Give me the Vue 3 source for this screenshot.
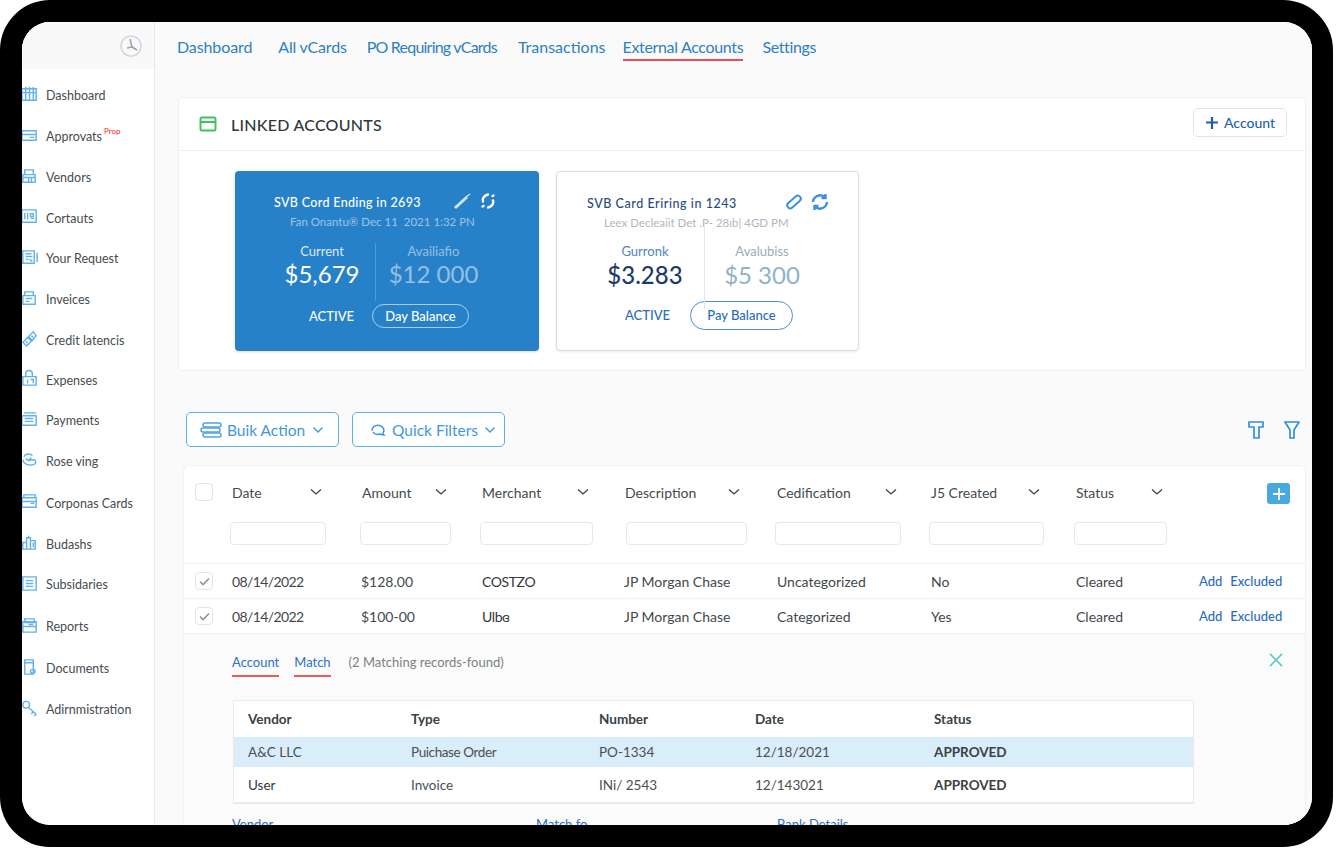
<script setup>
const side = [
  { n: 'Dashboard', h: 41, p: 'M2 4h15v12H2zM2 8h15M6 2v14M10 2v14M14 2v14' },
  { n: 'Approvats', h: 41, tag: 'Prop', p: 'M2 5h15v10H2zM2 9h15M10 12h5' },
  { n: 'Vendors', h: 41, p: 'M5 3h9v5H5zM3 8h13v8H3zM3 11h13M9 11v5M12 11v5' },
  { n: 'Cortauts', h: 40, p: 'M2 3h15v13H2zM5 6v7M8 6v7M11 7h3v3h-3zM11 12h4' },
  { n: 'Your Request', h: 41, p: 'M3 3h12v13H3zM6 6h6M6 9h7M6 12h3M10 12l3 2M18 5v10' },
  { n: 'Inveices', h: 41, p: 'M5 3h9v4H5zM3 7h13v9H3zM6 10h7M6 13h4' },
  { n: 'Credit latencis', h: 40, p: 'M3 14l4 4 5-5-4-4zM9 8l4 4 4-5-3-4zM6 13l2 2M12 7l2 2' },
  { n: 'Expenses', h: 40, p: 'M6 8V5a3.5 3.5 0 017 0v3M3 8h14v9H3zM8 11v4M11 11h3v4' },
  { n: 'Payments', h: 41, p: 'M4 3h13M2 6h15v10H2zM5 9h9M5 12h9' },
  { n: 'Rose ving', h: 41, p: 'M4 6a5 4 0 019-1M3 9c0 5 7 7 12 5 2-1 2-4 0-5l-6 1M6 8l3 2 3-3' },
  { n: 'Corponas Cards', h: 42, p: 'M4 3h12v3H4zM2 6h15v10H2zM2 10h15M11 12h4' },
  { n: 'Budashs', h: 40, p: 'M3 10h4v7H3zM7 5h4v12H7zM11 8h5v9h-5zM9 3v2M14 10v5' },
  { n: 'Subsidaries', h: 41, p: 'M3 3h14v14H3zM6 7h8M6 10h8M6 13h8' },
  { n: 'Reports', h: 43, p: 'M5 3h10v4H5zM3 6h14v5H3zM3 11h14v6H3zM9 9h5' },
  { n: 'Documents', h: 41, p: 'M5 2h9v15H5zM5 5h9M11 14a2.5 2 0 105 0 2.5 2 0 10-5 0' },
  { n: 'Adirnmistration', h: 41, p: 'M3 6a3.5 3.5 0 107 0 3.5 3.5 0 10-7 0M9 9l8 7M14 13l-2 3M17 16l-2 2' },
]
const tabs = [
  { n: 'Dashboard', m: 26, ls: -0.1 }, { n: 'All vCards', m: 20, ls: -0.2 }, { n: 'PO Requiring vCards', m: 21, ls: -0.78 },
  { n: 'Transactions', m: 17, ls: 0 }, { n: 'External Accounts', m: 19, ls: -0.33, on: true }, { n: 'Settings', m: 0, ls: -0.35 },
]
const cols = [
  { n: 'Date', w: 96, ml: 0 }, { n: 'Amount', w: 91, ml: 0 }, { n: 'Merchant', w: 113, ml: 0 }, { n: 'Description', w: 121, ml: 3 },
  { n: 'Cedification', w: 126, ml: 0 }, { n: 'J5 Created', w: 115, ml: 0 }, { n: 'Status', w: 93, ml: 0 },
]
const rows = [
  ['08/14/2022', '$128.00', 'COSTZO', 'JP Morgan Chase', 'Uncategorized', 'No', 'Cleared'],
  ['08/14/2022', '$100-00', 'Ulbɞ', 'JP Morgan Chase', 'Categorized', 'Yes', 'Cleared'],
]
</script>

<template>
  <div class="frame">
    <div class="window">
      <aside class="sidebar">
        <div class="brand">
          <svg width="24" height="24" viewBox="0 0 24 24" fill="none" stroke="#d3d8dc" stroke-width="1.6">
            <circle cx="12" cy="12" r="10" />
            <path d="M11 5l2 8-5 1M13 13l5 3" stroke="#9aa3aa" />
          </svg>
        </div>
        <nav class="side-nav">
          <a v-for="s in side" :key="s.n" class="side-item" :style="{ height: s.h + 'px' }">
            <svg class="side-icon" width="19" height="19" viewBox="0 0 20 20" fill="none" stroke="#62b1ef" stroke-width="1.5">
              <path :d="s.p" />
            </svg>
            <span>{{ s.n }}</span>
            <sup v-if="s.tag" class="tag">{{ s.tag }}</sup>
          </a>
        </nav>
      </aside>

      <main class="main">
        <nav class="tabs">
          <a v-for="t in tabs" :key="t.n" class="tab" :class="{ on: t.on }" :style="{ marginRight: t.m + 'px', letterSpacing: t.ls + 'px' }">{{ t.n }}</a>
        </nav>

        <section class="linked">
          <header class="linked-head">
            <svg width="18" height="16" viewBox="0 0 18 16" fill="none" stroke="#3dc45a" stroke-width="2">
              <rect x="1.5" y="1.5" width="15" height="13" rx="1.5" />
              <path d="M1.5 6h15" />
            </svg>
            <h2>LINKED ACCOUNTS</h2>
            <button class="add-account">
              <svg width="14" height="14" viewBox="0 0 14 14" fill="none" stroke="#1f5eae" stroke-width="2.2"><path d="M7 1v12M1 6.5h12" /></svg>
              Account
            </button>
          </header>
          <div class="cards">
            <article class="card blue">
              <div class="card-title">
                <span>SVB Cord Ending in 2693</span>
                <span class="card-icons">
                  <svg width="20" height="18" viewBox="0 0 20 18" fill="none" stroke="#cfe4f5" stroke-width="3"><path d="M3 16L15 5" /><path d="M14 5l4-3" stroke-width="1.5" /></svg>
                  <svg width="18" height="18" viewBox="0 0 18 18" fill="none" stroke="#fff" stroke-width="2.4" stroke-linecap="round"><path d="M4 9.5c-1-3 1-6 5-7M14.5 3.5l-1 .5M14 8.5c1 3-1 6-5 7M3.5 14.5l1-.5" /></svg>
                </span>
              </div>
              <p class="card-sub">Fan Onantu® Dec 11&nbsp; 2021 1:32 PN</p>
              <div class="stats">
                <div class="stat"><label>Current</label><b>$5,679</b></div>
                <div class="stat second"><label>Availiafio</label><b>$12 000</b></div>
              </div>
              <div class="card-foot">
                <span class="active">ACTIVE</span>
                <button class="pay">Day Balance</button>
              </div>
            </article>
            <article class="card plain">
              <div class="card-title">
                <span>SVB Card Eriring in 1243</span>
                <span class="card-icons">
                  <svg width="20" height="18" viewBox="0 0 20 18" fill="none" stroke="#3d8fdf" stroke-width="2"><rect x="2" y="6" width="16" height="6" rx="3" transform="rotate(-42 10 9)" /></svg>
                  <svg width="20" height="18" viewBox="0 0 20 18" fill="none" stroke="#3d8fdf" stroke-width="2.4"><path d="M3 9a7 7 0 0112-4.5M15.5 1v4h-4M17 9a7 7 0 01-12 4.500M4.500 17v-4h4" /></svg>
                </span>
              </div>
              <p class="card-sub">Leex Decleaiit Det .P- 28ıb| 4GD PM</p>
              <div class="stats">
                <div class="stat"><label>Gurronk</label><b>$3.283</b></div>
                <div class="stat second"><label>Avalubiss</label><b>$5 300</b></div>
              </div>
              <div class="card-foot">
                <span class="active">ACTIVE</span>
                <button class="pay">Pay Balance</button>
              </div>
            </article>
          </div>
        </section>

        <div class="toolbar">
          <button class="tool">
            <svg width="22" height="18" viewBox="0 0 22 18" fill="none" stroke="#4fa3e8" stroke-width="1.5"><rect x="3" y="2" width="18" height="4" rx="2" /><rect x="1" y="7" width="19" height="4" rx="2" /><rect x="3" y="12" width="18" height="4" rx="2" /></svg>
            Buik Action
            <svg class="chev" width="12" height="8" viewBox="0 0 12 8" fill="none" stroke="#3f97e2" stroke-width="1.4"><path d="M1.500 1.500L6 6l4.500-4.500" /></svg>
          </button>
          <button class="tool second-tool">
            <svg width="16" height="14" viewBox="0 0 16 14" fill="none" stroke="#3f97e2" stroke-width="1.5"><path d="M2 8a6 5 0 1111 2c0 1 1 2 1 2-2 0-3-.5-4-1-3 1-6 0-7-2" /></svg>
            Quick Filters
            <svg width="12" height="8" viewBox="0 0 12 8" fill="none" stroke="#3f97e2" stroke-width="1.4"><path d="M1.500 1.500L6 6l4.500-4.500" /></svg>
          </button>
          <div class="tool-icons">
            <svg width="16" height="18" viewBox="0 0 16 18" fill="none" stroke="#2f8fe0" stroke-width="1.7"><path d="M1 1h14v5h-4v11H6V6H1z" stroke-linejoin="round" /></svg>
            <svg width="16" height="18" viewBox="0 0 16 18" fill="none" stroke="#2f8fe0" stroke-width="1.7"><path d="M1 1h14L10 9v8H6V9z" stroke-linejoin="round" /></svg>
          </div>
        </div>

        <section class="table-card">
          <div class="grid head">
            <span class="check-cell"><i class="check"></i></span>
            <div v-for="c in cols" :key="c.n" class="th">
              <div class="th-label" :style="{ width: c.w + 'px' }">
                <span>{{ c.n }}</span>
                <svg width="12" height="8" viewBox="0 0 12 8" fill="none" stroke="#3d4347" stroke-width="1.3"><path d="M1 1.500L6 6l5-4.500" /></svg>
              </div>
              <input class="filter" :style="{ width: c.w + 'px', marginLeft: c.ml + 'px' }" />
            </div>
            <button class="plus">
              <svg width="12" height="12" viewBox="0 0 12 12" fill="none" stroke="#fff" stroke-width="1.8"><path d="M6 0v12M0 6h12" /></svg>
            </button>
          </div>
          <div v-for="(r, i) in rows" :key="i" class="grid row">
            <span class="check-cell">
              <i class="check">
                <svg width="11" height="9" viewBox="0 0 11 9" fill="none" stroke="#8f969b" stroke-width="1.6"><path d="M1 4.500L4 7.500 10 1.500" /></svg>
              </i>
            </span>
            <span v-for="(v, j) in r" :key="j" class="td" :class="'c' + j">{{ v }}</span>
            <span class="actions"><a>Add</a><a>Excluded</a></span>
          </div>

          <div class="detail">
            <div class="detail-head">
              <a class="u">Account</a>
              <a class="u">Match</a>
              <span class="found">(2 Matching records-found)</span>
              <svg class="close" width="14" height="14" viewBox="0 0 15 15" fill="none" stroke="#5cc8d0" stroke-width="1.7"><path d="M1 1l13 13M14 1L1 14" /></svg>
            </div>
            <div class="inner">
              <div class="i-row i-head"><span>Vendor</span><span>Type</span><span>Number</span><span>Date</span><span>Status</span></div>
              <div class="i-row hl"><span>A&amp;C LLC</span><span class="tight">Puichase Order</span><span>PO-1334</span><span>12/18/2021</span><b>APPROVED</b></div>
              <div class="i-row last"><span class="dark">User</span><span>Invoice</span><span>INi/ 2543</span><span>12/143021</span><b>APPROVED</b></div>
            </div>
            <div class="detail-foot"><a>Vendor</a><a>Match fo</a><a>Bank Details</a></div>
          </div>
        </section>
      </main>
    </div>
  </div>
</template>

<style>
html, body { margin: 0; background: #fff; overflow: hidden; }
</style>

<style scoped>
.frame {
  width: 1333px; height: 847px; box-sizing: border-box; background: #000; border-radius: 50px;
  padding: 22px 21px 22px 22px; font-family: Lato, "Liberation Sans", sans-serif; color: #3c4348;
}
.window { height: 803px; display: flex; overflow: hidden; border-radius: 28px; background: #fff; }
.sidebar { width: 132px; flex: none; background: #fff; border-right: 1px solid #e6e8ea; }
.brand { height: 47px; background: #f9f9f9; display: flex; justify-content: flex-end; align-items: center; padding-right: 11px; }
.side-nav { padding-top: 6px; }
.side-item { display: flex; align-items: center; font-size: 12.5px; color: #464c50; }
.side-icon { margin-left: -2px; margin-right: 7px; flex: none; margin-top: -3px; }
.tag { color: #ef2a2a; font-size: 8px; margin: -12px 0 0 2px; line-height: 1; }
.main { flex: 1; min-width: 0; background: #fafafa; padding-right: 6px; }
.tabs { height: 48px; margin-left: 22px; display: flex; align-items: flex-start; padding-top: 15px; box-sizing: border-box; }
.tab { font-size: 16px; line-height: 20px; color: #2d7fc4; padding-bottom: 2px; border-bottom: 2px solid transparent; }
.tab.on { border-bottom-color: #ec4b55; }
.linked { margin: 27px 0 0 23px; height: 274px; box-sizing: border-box; background: #fff; border: 1px solid #eeeff0; border-radius: 4px; }
.linked-head { height: 53px; box-sizing: border-box; border-bottom: 1px solid #f0f0f0; display: flex; align-items: center; padding: 0 18px 0 20px; }
.linked-head h2 { font-size: 16px; font-weight: 500; letter-spacing: .25px; color: #30363a; margin: 0 0 0 14px; flex: 1; }
.add-account {
  display: flex; align-items: center; gap: 5px; width: 94px; height: 29px; justify-content: center; padding: 0; margin-top: -3px;
  background: #fff; border: 1px solid #dfe5ea; border-radius: 5px; color: #235fae; font: 500 14px Lato, sans-serif;
}
.cards { display: flex; gap: 17px; padding: 20px 0 0 56px; }
.card { width: 304px; height: 180px; box-sizing: border-box; border-radius: 4px; position: relative; padding-top: 20px; }
.card.blue { background: #2781c8; color: #fff; padding-left: 39px; box-shadow: 0 1px 3px rgba(0,0,0,.15); }
.card.plain { width: 303px; background: #fff; border: 1px solid #d8dce0; padding-left: 30px; color: #2a4a80; box-shadow: 0 1px 3px rgba(0,0,0,.08); }
.card-title { display: flex; align-items: center; height: 22px; font-size: 12.5px; font-weight: 500; letter-spacing: .33px; white-space: nowrap; }
.plain .card-title { letter-spacing: .55px; }
.card-icons { display: flex; position: absolute; right: 42px; top: 21px; gap: 7px; }
.plain .card-icons { right: 28px; gap: 6px; }
.card-sub { margin: 0 0 0 16px; font-size: 11.5px; line-height: 18px; white-space: nowrap; color: rgba(255,255,255,.55); }
.plain .card-sub { margin-left: 17px; color: #aeb7c0; }
.stats { display: grid; grid-template-columns: 101px 116px; margin: 11px 0 0 -5px; height: 58px; }
.blue .stats { grid-template-columns: 106px 116px; margin-top: 12px; }
.plain .stats { grid-template-columns: 118px 116px; margin-left: -1px; }
.stat { display: flex; flex-direction: column; align-items: center; position: relative; }
.stat label { font-size: 13px; line-height: 17px; color: rgba(255,255,255,.85); }
.stat b { font-size: 24px; font-weight: 400; line-height: 30px; white-space: nowrap; }
.blue .stat b { line-height: 28px; }
.stat.second { border-left: 1px solid rgba(255,255,255,.2); }
.stat.second label, .stat.second b { color: rgba(255,255,255,.5); }
.plain .stat label { color: #4b84c4; }
.plain .stat b { color: #1c3a70; font-weight: 500; }
.plain .stat.second { border-left: 0; }
.plain .stat.second::before { content: ""; position: absolute; left: 0; top: -22px; height: 88px; width: 1px; background: #e2e6ea; }
.plain .stat.second label { color: #9aabbb; }
.plain .stat.second b { color: #8fb2cc; font-weight: 400; }
.card-foot { display: flex; align-items: center; margin-top: 0; height: 30px; padding-left: 35px; }
.plain .card-foot { padding-left: 38px; margin-top: -1px; }
.active { font-size: 13px; font-weight: 500; width: 63px; }
.plain .active { color: #2a6cc0; width: 65px; }
.pay {
  width: 97px; height: 24px; border-radius: 12px; border: 1px solid rgba(255,255,255,.6); background: transparent;
  color: #fff; font: 500 13px Lato, sans-serif; padding: 0;
}
.plain .pay { width: 103px; height: 29px; border-radius: 15px; border-color: #4a90d8; color: #2a6cc0; }
.toolbar { margin: 41px 0 0 31px; display: flex; align-items: center; height: 35px; }
.tool {
  height: 35px; width: 153px; box-sizing: border-box; background: #fff; border: 1px solid #5aaeea; border-radius: 5px;
  color: #3f97e2; font: 400 15.5px Lato, sans-serif; display: flex; align-items: center; padding: 0 0 0 13px; gap: 5px;
}
.chev { margin-left: 2px; }
.second-tool { margin-left: 13px; padding-left: 17px; gap: 6px; }
.tool-icons { margin-left: auto; display: flex; gap: 20px; padding-right: 6px; }
.table-card { margin: 18px 0 0 28px; background: #fff; border: 1px solid #f0f1f2; border-bottom: 0; border-radius: 6px 6px 0 0; height: 360px; overflow: hidden; }
.grid { display: grid; grid-template-columns: 46px 130px 120px 143px 152px 154px 145px 1fr; position: relative; }
.head { height: 98px; border-bottom: 1px solid #eeeff0; box-sizing: border-box; }
.check-cell { padding-left: 11px; }
.head .check-cell { padding-top: 17px; }
.check { display: flex; width: 18px; height: 18px; box-sizing: border-box; border: 1px solid #e2e5e7; border-radius: 4px; align-items: center; justify-content: center; background: #fff; }
.th-label { display: flex; align-items: center; justify-content: space-between; height: 20px; margin-top: 16px; font-size: 14px; box-sizing: border-box; padding: 0 4px 0 2px; color: #444a4e; }
.filter { display: block; box-sizing: border-box; height: 23px; margin-top: 20px; background: #fff; border: 1px solid #e6e8ea; border-radius: 4px; padding: 0; }
.plus { position: absolute; right: 15px; top: 17px; width: 23px; height: 21px; padding: 0; border: 0; border-radius: 3px; background: #47a9dd; display: flex; align-items: center; justify-content: center; }
.row { height: 35px; box-sizing: border-box; align-items: center; border-bottom: 1px solid #f0f1f2; font-size: 14px; color: #42484c; grid-template-columns: 46px 130px 120px 143px 152px 154px 145px 125px 1fr; }
.row .check-cell { display: flex; }
.td { padding-left: 2px; white-space: nowrap; }
.c0 { letter-spacing: -.6px; }
.c1 { margin-left: -1px; }
.c2 { color: #33383c; letter-spacing: -.4px; }
.c3 { margin-left: -1px; }
.actions { display: flex; gap: 8px; font-size: 13px; font-weight: 500; color: #2a6cc0; white-space: nowrap; }
.detail { background: #fbfbfb; padding-left: 48px; position: relative; }
.detail-head { height: 66px; display: flex; align-items: flex-start; padding-top: 19px; box-sizing: border-box; font-size: 13px; position: relative; }
.u { color: #2a72c8; line-height: 18px; padding-bottom: 4px; border-bottom: 2px solid #ec5a60; margin-right: 15px; }
.found { color: #7c8286; margin-left: 3px; line-height: 18px; }
.close { position: absolute; right: 22px; top: 19px; }
.inner { width: 961px; margin-left: 1px; background: #fff; border: 1px solid #e8eaec; box-sizing: border-box; font-size: 13.5px; }
.i-row { display: grid; grid-template-columns: 163px 188px 156px 179px 1fr; align-items: center; padding-left: 14px; height: 30px; color: #4a5054; }
.i-head { height: 36px; font-weight: 700; color: #3a4145; }
.hl { background: #d9edfb; }
.tight { letter-spacing: -.4px; }
.last { box-sizing: content-box; height: 35px; border-bottom: 1px solid #e8eaec; }
.dark { color: #33383c; }
.i-row b { font-weight: 700; color: #3a4145; }
.detail-foot { display: grid; grid-template-columns: 304px 241px 1fr; font-size: 13px; color: #2a72c8; margin-top: 12px; }
</style>
